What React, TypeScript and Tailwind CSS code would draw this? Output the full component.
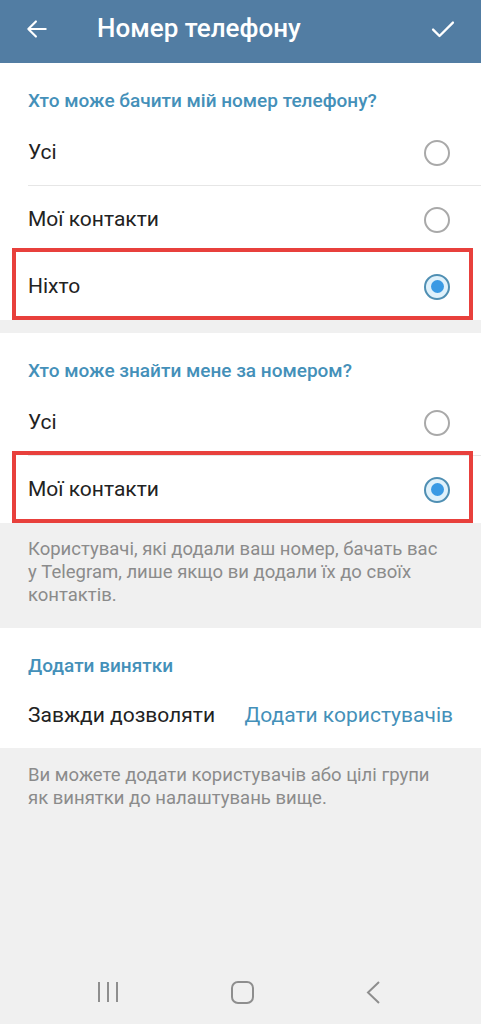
import { ReactNode } from 'react';

const font = { fontFamily: 'Roboto, "Noto Sans", sans-serif' };

function Radio({ checked }: { checked?: boolean }) {
  if (checked) {
    return (
      <div className="flex h-[26px] w-[26px] items-center justify-center rounded-full border-[2.5px] border-[#4f8fb3] bg-[#dff1fb]">
        <div className="h-[13px] w-[13px] rounded-full bg-[#3a9ae4]" />
      </div>
    );
  }
  return <div className="h-[26px] w-[26px] rounded-full border-2 border-[#a9a9a9]" />;
}

function SectionHeader({ children }: { children: ReactNode }) {
  return (
    <div className="h-[56px] px-[28px] pt-[26px] text-[19px] font-medium leading-[24px] text-[#4490b9]">
      {children}
    </div>
  );
}

function RadioRow({
  label,
  checked,
  divider,
  marked,
}: {
  label: string;
  checked?: boolean;
  divider?: boolean;
  marked?: boolean;
}) {
  return (
    <div className="relative flex h-[67px] items-center justify-between pl-[28px] pr-[31px]">
      <span className="text-[21px] text-[#222222]">{label}</span>
      <Radio checked={checked} />
      {divider && <div className="absolute bottom-0 left-[28px] right-0 h-px bg-[#e6e6e6]" />}
      {marked && (
        <div className="absolute -top-[5px] bottom-0 left-[12px] right-[8px] border-4 border-[#e8403c]" />
      )}
    </div>
  );
}

function NavBar() {
  return (
    <div className="flex h-[64px] items-center gap-[112px] pl-[97px]">
      <svg width="22" height="22" viewBox="0 0 22 22" fill="none" stroke="#8e8e8e" strokeWidth="2">
        <path d="M2 1v20M11 1v20M20 1v20" />
      </svg>
      <svg width="23" height="23" viewBox="0 0 23 23" fill="none" stroke="#8e8e8e" strokeWidth="2">
        <rect x="1" y="1" width="21" height="21" rx="6" />
      </svg>
      <svg width="16" height="23" viewBox="0 0 16 23" fill="none" stroke="#8e8e8e" strokeWidth="2">
        <path d="M13 1L2 11.5L13 22" />
      </svg>
    </div>
  );
}

export default function App() {
  return (
    <div className="flex min-h-screen flex-col bg-[#f0f0f0]" style={font}>
      <header className="flex h-[63px] items-center bg-[#527da3] pb-[6px] pl-[24px] pr-[24px] text-white">
        <svg width="26" height="26" viewBox="0 0 24 24" fill="none" stroke="white" strokeWidth="2" strokeLinecap="round" strokeLinejoin="round">
          <path d="M20 12H4M11 5l-7 7 7 7" />
        </svg>
        <h1 className="ml-[47px] flex-1 text-[26px] font-medium">Номер телефону</h1>
        <svg width="28" height="28" viewBox="0 0 24 24" fill="none" stroke="white" strokeWidth="2" strokeLinecap="round" strokeLinejoin="round">
          <path d="M3.5 12.5l5.5 5.5L20.5 6.5" />
        </svg>
      </header>

      <section className="bg-white">
        <SectionHeader>Хто може бачити мій номер телефону?</SectionHeader>
        <RadioRow label="Усі" divider />
        <RadioRow label="Мої контакти" />
        <RadioRow label="Ніхто" checked marked />
      </section>

      <div className="h-[13px]" />

      <section className="bg-white">
        <SectionHeader>Хто може знайти мене за номером?</SectionHeader>
        <RadioRow label="Усі" divider />
        <RadioRow label="Мої контакти" checked marked />
      </section>

      <p className="px-[28px] pb-[21px] pt-[15px] text-[18.5px] leading-[23px] text-[#8b8b8b]">
        Користувачі, які додали ваш номер, бачать вас
        <br />у Telegram, лише якщо ви додали їх до своїх
        <br />
        контактів.
      </p>

      <section className="bg-white">
        <SectionHeader>Додати винятки</SectionHeader>
        <div className="flex h-[64px] items-center justify-between pl-[28px] pr-[28px] text-[21px]">
          <span className="text-[#222222]">Завжди дозволяти</span>
          <span className="text-[#4490b9]">Додати користувачів</span>
        </div>
      </section>

      <p className="flex-1 px-[28px] pt-[16px] text-[18.5px] leading-[23px] text-[#8b8b8b]">
        Ви можете додати користувачів або цілі групи
        <br />
        як винятки до налаштувань вище.
      </p>

      <NavBar />
    </div>
  );
}
